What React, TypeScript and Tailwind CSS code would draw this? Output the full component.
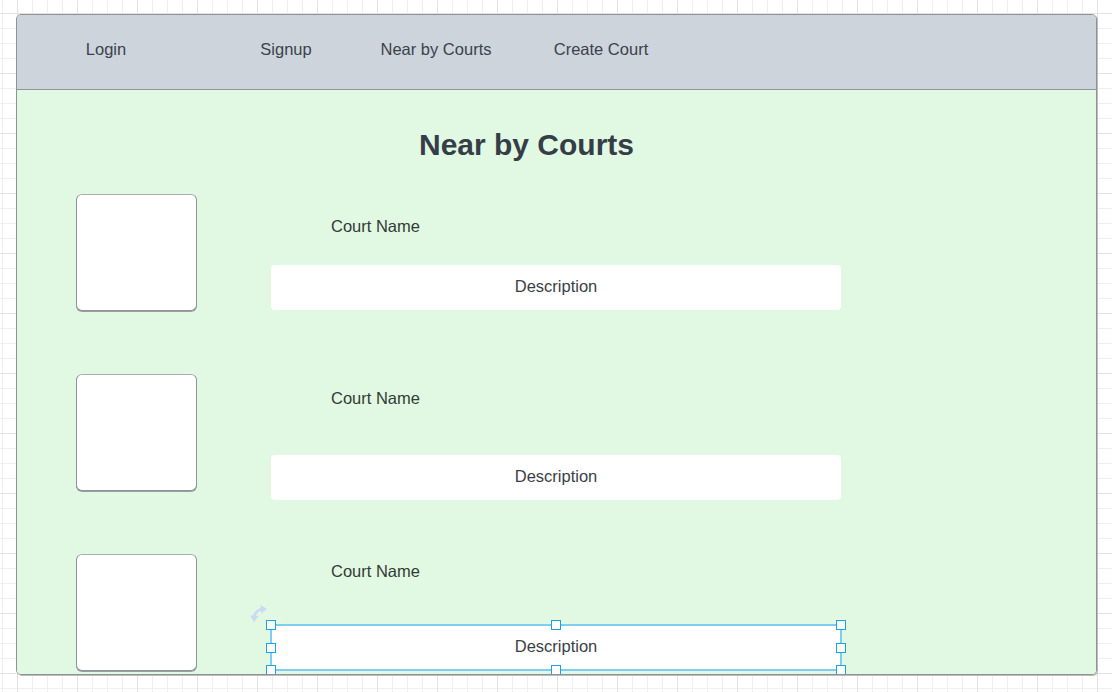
import React from "react";

const rows = [
  { nameMt: "mt-[22px]", descMt: "mt-[28px]", rowH: "h-[180px]", selected: false },
  { nameMt: "mt-[14px]", descMt: "mt-[46px]", rowH: "h-[180px]", selected: false },
  { nameMt: "mt-[7px]", descMt: "mt-[43px]", rowH: "h-[180px]", selected: true },
];

function Handle({ cls }: { cls: string }) {
  return (
    <div
      className={
        "absolute w-[10px] h-[10px] bg-white border-[1.5px] border-[#1ba1e6] " + cls
      }
    />
  );
}

function Selection() {
  return (
    <>
      <div className="pointer-events-none absolute -inset-[1px] border-2 border-[#7fcdf0]" />
      <Handle cls="-left-[5px] -top-[5px]" />
      <Handle cls="left-[280px] -top-[5px]" />
      <Handle cls="-right-[5px] -top-[5px]" />
      <Handle cls="-left-[5px] top-[18px]" />
      <Handle cls="-right-[5px] top-[18px]" />
      <Handle cls="-left-[5px] -bottom-[5px]" />
      <Handle cls="left-[280px] -bottom-[5px]" />
      <Handle cls="-right-[5px] -bottom-[5px]" />
      <svg
        className="absolute -left-[22px] -top-[21px]"
        width="22"
        height="22"
        viewBox="0 0 22 22"
        fill="none"
      >
        <path
          d="M5 15 C5 9 9 5 15 5"
          stroke="#c9dbf3"
          strokeWidth="2.6"
          strokeLinecap="round"
        />
        <path d="M11.5 1 L18 5 L12 9.5 Z" fill="#c9dbf3" />
        <path d="M1 11.5 L5 18 L9.5 12 Z" fill="#c9dbf3" />
      </svg>
    </>
  );
}

export default function App() {
  return (
    <div
      className="w-[1112px] h-[692px] overflow-hidden pt-[14px] pl-[16px] bg-white bg-[linear-gradient(to_right,#e2e2e2_1px,transparent_1px),linear-gradient(to_bottom,#e2e2e2_1px,transparent_1px),linear-gradient(to_right,#efefef_1px,transparent_1px),linear-gradient(to_bottom,#efefef_1px,transparent_1px)] bg-[size:60px_60px,60px_60px,15px_15px,15px_15px] bg-[position:17px_13px,17px_13px,2px_13px,2px_13px]"
      style={{ fontFamily: '"Liberation Sans", Arial, sans-serif' }}
    >
      <div className="w-[1081px] h-[661px] flex flex-col rounded-[5px] border border-[#8e9398] shadow-[1px_1px_0_#b9bcbf] overflow-hidden">
        <div className="h-[75px] shrink-0 flex items-center pb-[6px] bg-[#cdd4dc] border-b border-[#8e9398] text-[16.5px] text-[#3b424b]">
          <div className="ml-[29px] w-[120px] text-center">Login</div>
          <div className="ml-[60px] w-[120px] text-center">Signup</div>
          <div className="ml-[30px] w-[120px] text-center">Near by Courts</div>
          <div className="ml-[45px] w-[120px] text-center">Create Court</div>
        </div>
        <div className="flex-1 bg-[#e1f9e2] flex flex-col pt-[38px] overflow-visible">
          <h1 className="text-center text-[30px] leading-[34px] font-bold text-[#353e47] pr-[60px]">
            Near by Courts
          </h1>
          <div className="mt-[32px] flex flex-col">
            {rows.map((r, i) => (
              <div key={i} className={"flex shrink-0 " + r.rowH}>
                <div className="ml-[59px] w-[121px] h-[117px] bg-white rounded-[6px] border border-[#8f9499] border-t-[#a9aeb2] shadow-[0_1px_0_#9a9ea2]" />
                <div className="ml-[74px] flex flex-col">
                  <div className={"ml-[60px] text-[16.5px] leading-[21px] text-[#343a36] " + r.nameMt}>
                    Court Name
                  </div>
                  <div
                    className={
                      "relative w-[570px] h-[45px] bg-white rounded-[4px] flex items-center justify-center pb-[2px] text-[16.5px] text-[#3a3f45] " +
                      r.descMt
                    }
                  >
                    Description
                    {r.selected && <Selection />}
                  </div>
                </div>
              </div>
            ))}
          </div>
        </div>
      </div>
    </div>
  );
}
